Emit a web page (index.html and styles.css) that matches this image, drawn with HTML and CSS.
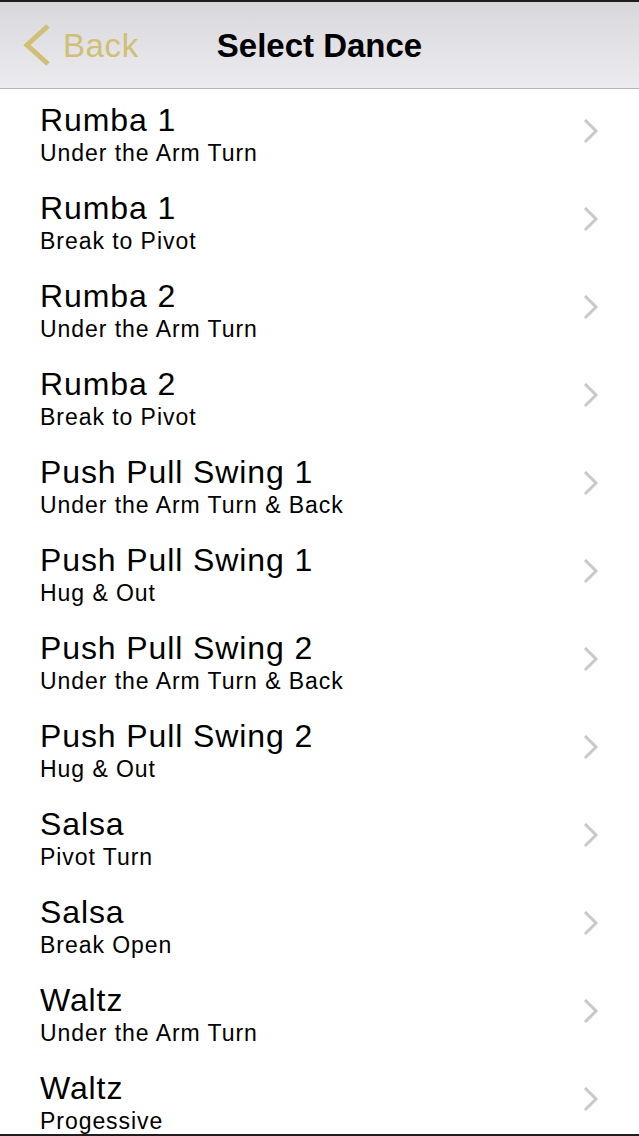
FILE: index.html
```html
<!DOCTYPE html>
<html>
<head>
<meta charset="utf-8">
<link rel="stylesheet" href="styles.css">
</head>
<body>
<div class="screen">
  <header class="nav">
    <div class="back">
      <svg class="back-chev" width="30" height="44" viewBox="0 0 30 44"><polyline points="26,3 5,22 26,41" fill="none" stroke="#d0bf74" stroke-width="5"/></svg>
      <span class="back-label">Back</span>
    </div>
    <div class="title">Select Dance</div>
    <div></div>
  </header>
  <ul class="list">
    <li class="row"><div class="text"><div class="name">Rumba 1</div><div class="sub">Under the Arm Turn</div></div><svg class="chev" width="16" height="26" viewBox="0 0 16 26"><polyline points="2,2 13,13 2,24" fill="none" stroke="#c8c7cc" stroke-width="3"/></svg></li>
    <li class="row"><div class="text"><div class="name">Rumba 1</div><div class="sub">Break to Pivot</div></div><svg class="chev" width="16" height="26" viewBox="0 0 16 26"><polyline points="2,2 13,13 2,24" fill="none" stroke="#c8c7cc" stroke-width="3"/></svg></li>
    <li class="row"><div class="text"><div class="name">Rumba 2</div><div class="sub">Under the Arm Turn</div></div><svg class="chev" width="16" height="26" viewBox="0 0 16 26"><polyline points="2,2 13,13 2,24" fill="none" stroke="#c8c7cc" stroke-width="3"/></svg></li>
    <li class="row"><div class="text"><div class="name">Rumba 2</div><div class="sub">Break to Pivot</div></div><svg class="chev" width="16" height="26" viewBox="0 0 16 26"><polyline points="2,2 13,13 2,24" fill="none" stroke="#c8c7cc" stroke-width="3"/></svg></li>
    <li class="row"><div class="text"><div class="name">Push Pull Swing 1</div><div class="sub">Under the Arm Turn &amp; Back</div></div><svg class="chev" width="16" height="26" viewBox="0 0 16 26"><polyline points="2,2 13,13 2,24" fill="none" stroke="#c8c7cc" stroke-width="3"/></svg></li>
    <li class="row"><div class="text"><div class="name">Push Pull Swing 1</div><div class="sub">Hug &amp; Out</div></div><svg class="chev" width="16" height="26" viewBox="0 0 16 26"><polyline points="2,2 13,13 2,24" fill="none" stroke="#c8c7cc" stroke-width="3"/></svg></li>
    <li class="row"><div class="text"><div class="name">Push Pull Swing 2</div><div class="sub">Under the Arm Turn &amp; Back</div></div><svg class="chev" width="16" height="26" viewBox="0 0 16 26"><polyline points="2,2 13,13 2,24" fill="none" stroke="#c8c7cc" stroke-width="3"/></svg></li>
    <li class="row"><div class="text"><div class="name">Push Pull Swing 2</div><div class="sub">Hug &amp; Out</div></div><svg class="chev" width="16" height="26" viewBox="0 0 16 26"><polyline points="2,2 13,13 2,24" fill="none" stroke="#c8c7cc" stroke-width="3"/></svg></li>
    <li class="row"><div class="text"><div class="name">Salsa</div><div class="sub">Pivot Turn</div></div><svg class="chev" width="16" height="26" viewBox="0 0 16 26"><polyline points="2,2 13,13 2,24" fill="none" stroke="#c8c7cc" stroke-width="3"/></svg></li>
    <li class="row"><div class="text"><div class="name">Salsa</div><div class="sub">Break Open</div></div><svg class="chev" width="16" height="26" viewBox="0 0 16 26"><polyline points="2,2 13,13 2,24" fill="none" stroke="#c8c7cc" stroke-width="3"/></svg></li>
    <li class="row"><div class="text"><div class="name">Waltz</div><div class="sub">Under the Arm Turn</div></div><svg class="chev" width="16" height="26" viewBox="0 0 16 26"><polyline points="2,2 13,13 2,24" fill="none" stroke="#c8c7cc" stroke-width="3"/></svg></li>
    <li class="row"><div class="text"><div class="name">Waltz</div><div class="sub">Progessive</div></div><svg class="chev" width="16" height="26" viewBox="0 0 16 26"><polyline points="2,2 13,13 2,24" fill="none" stroke="#c8c7cc" stroke-width="3"/></svg></li>
  </ul>
</div>
</body>
</html>
```
FILE: styles.css
```css
* { box-sizing: border-box; }
html, body { margin: 0; padding: 0; background: #ffffff; }
body { font-family: "Liberation Sans", Arial, sans-serif; color: #000; }
.screen {
  width: 639px;
  height: 1136px;
  overflow: hidden;
  border-bottom: 2px solid #1e1e1e;
  background: #fff;
}
.nav {
  height: 89px;
  border-top: 2px solid #1e1e1e;
  border-bottom: 1px solid #b4b3b6;
  background: linear-gradient(#d8d7dc, #e6e5e9 70%, #ebeaee);
  display: grid;
  grid-template-columns: 1fr auto 1fr;
  align-items: center;
}
.back {
  display: flex;
  align-items: center;
  padding-left: 22px;
  gap: 11px;
}
.back-chev { display: block; }
.back-label {
  font-size: 33px;
  line-height: 33px;
  letter-spacing: 0.6px;
  color: #d0bf74;
}
.title {
  font-size: 33px;
  line-height: 33px;
  font-weight: bold;
  color: #000;
}
.list { list-style: none; margin: 0; padding: 0; }
.row {
  height: 88px;
  display: flex;
  padding-left: 40px;
  padding-right: 40px;
}
.text { flex: 1; padding-top: 15px; }
.name {
  font-size: 32px;
  line-height: 32px;
  letter-spacing: 0.9px;
  white-space: nowrap;
}
.sub {
  margin-top: 2px;
  font-size: 23px;
  line-height: 30px;
  letter-spacing: 0.95px;
  white-space: nowrap;
}
.chev { display: block; margin-top: 29px; }
```
